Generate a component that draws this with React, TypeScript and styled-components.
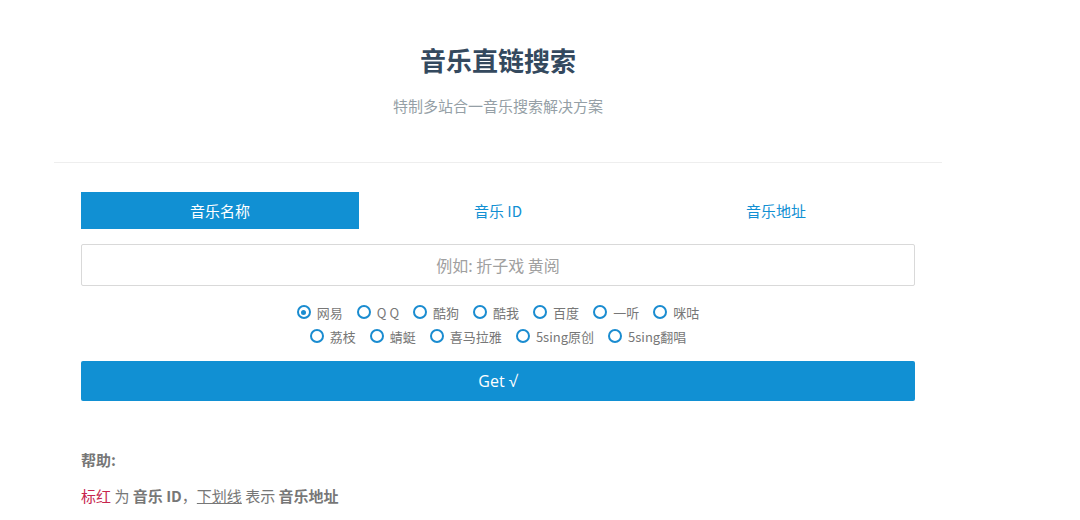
import React from "react";
import styled, { createGlobalStyle } from "styled-components";

const Global = createGlobalStyle`
  html, body { margin: 0; padding: 0; background: #fff; }
  body { font-family: "Open Sans", "Noto Sans CJK SC", sans-serif; color: #666; }
  * { box-sizing: border-box; }
`;

const Page = styled.div`
  width: 888px;
  margin-left: 54px;
  padding-top: 40px;
`;

const Header = styled.header`
  display: flex;
  flex-direction: column;
  align-items: center;
  padding-bottom: 46px;
  border-bottom: 1px solid #eeeeee;
`;

const Title = styled.h1`
  margin: 0;
  font-family: "Noto Sans CJK SC", sans-serif;
  font-size: 26px;
  line-height: 40px;
  font-weight: 700;
  color: #34495e;
`;

const Subtitle = styled.p`
  margin: 16px 0 0;
  font-family: "Noto Sans CJK SC", sans-serif;
  font-size: 15px;
  line-height: 20px;
  color: #959fa6;
`;

const Main = styled.main`
  padding: 29px 27px 0;
`;

const Tabs = styled.div`
  display: grid;
  grid-template-columns: repeat(3, 1fr);
  height: 37px;
`;

const Tab = styled.div<{ $active?: boolean }>`
  display: flex;
  align-items: center;
  justify-content: center;
  font-family: "Noto Sans CJK SC", sans-serif;
  font-size: 15px;
  color: ${(p) => (p.$active ? "#fff" : "#1190d3")};
  background: ${(p) => (p.$active ? "#1190d3" : "transparent")};
`;

const Input = styled.div`
  margin-top: 15px;
  height: 42px;
  border: 1px solid #d9d9d9;
  border-radius: 2px;
  display: flex;
  align-items: center;
  justify-content: center;
  font-family: "Noto Sans CJK SC", sans-serif;
  font-size: 16px;
  color: #a0a0a0;
`;

const Radios = styled.div`
  margin-top: 16px;
  display: flex;
  flex-direction: column;
  align-items: center;
  gap: 4px;
`;

const RadioRow = styled.div`
  display: flex;
  gap: 14px;
  height: 20px;
  align-items: center;
`;

const RadioItem = styled.label`
  display: flex;
  align-items: center;
  gap: 6px;
  font-family: "Noto Sans CJK SC", sans-serif;
  font-size: 13px;
  color: #777;
`;

const Circle = styled.span<{ $checked?: boolean }>`
  width: 14px;
  height: 14px;
  border-radius: 50%;
  border: 2px solid #1a8cd0;
  display: flex;
  align-items: center;
  justify-content: center;
  &::after {
    content: "";
    width: 5px;
    height: 5px;
    border-radius: 50%;
    background: ${(p) => (p.$checked ? "#1a8cd0" : "transparent")};
  }
`;

const Button = styled.div`
  margin-top: 15px;
  height: 40px;
  background: #1190d3;
  border-radius: 2px;
  display: flex;
  align-items: center;
  justify-content: center;
  font-family: "Open Sans", sans-serif;
  font-size: 16px;
  color: #fff;
`;

const Help = styled.section`
  margin-top: 49px;
  font-family: "Noto Sans CJK SC", sans-serif;
  font-size: 15px;
  color: #777;
`;

const HelpTitle = styled.p`
  margin: 0;
  font-weight: 700;
  line-height: 20px;
`;

const HelpLine = styled.p`
  margin: 16px 0 0;
  line-height: 20px;
`;

const Red = styled.span`
  color: #c7254e;
`;

const Strong = styled.b`
  font-weight: 700;
`;

const Under = styled.span`
  text-decoration: underline;
`;

const row1 = ["网易", "Q Q", "酷狗", "酷我", "百度", "一听", "咪咕"];
const row2 = ["荔枝", "蜻蜓", "喜马拉雅", "5sing原创", "5sing翻唱"];

export default function App() {
  return (
    <>
      <Global />
      <Page>
        <Header>
          <Title>音乐直链搜索</Title>
          <Subtitle>特制多站合一音乐搜索解决方案</Subtitle>
        </Header>
        <Main>
          <Tabs>
            <Tab $active>音乐名称</Tab>
            <Tab>音乐 ID</Tab>
            <Tab>音乐地址</Tab>
          </Tabs>
          <Input>例如: 折子戏 黄阅</Input>
          <Radios>
            <RadioRow>
              {row1.map((t, i) => (
                <RadioItem key={t}>
                  <Circle $checked={i === 0} />
                  {t}
                </RadioItem>
              ))}
            </RadioRow>
            <RadioRow>
              {row2.map((t) => (
                <RadioItem key={t}>
                  <Circle />
                  {t}
                </RadioItem>
              ))}
            </RadioRow>
          </Radios>
          <Button>Get √</Button>
          <Help>
            <HelpTitle>帮助:</HelpTitle>
            <HelpLine>
              <Red>标红</Red> 为 <Strong>音乐 ID</Strong>，<Under>下划线</Under> 表示 <Strong>音乐地址</Strong>
            </HelpLine>
          </Help>
        </Main>
      </Page>
    </>
  );
}
